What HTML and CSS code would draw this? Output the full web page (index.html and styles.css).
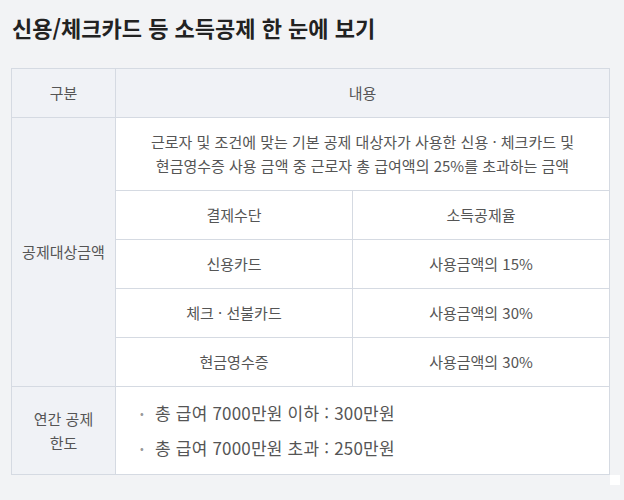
FILE: index.html
```html
<!DOCTYPE html>
<html lang="ko">
<head>
    <meta charset="UTF-8">
    <meta name="viewport" content="width=device-width, initial-scale=1.0">
    <title>신용/체크카드 등 소득공제 한 눈에 보기</title>
    <link rel="stylesheet" href="styles.css">
</head>
<body>
    <div class="page">
        <h1 class="title">신용/체크카드 등 소득공제 한 눈에 보기</h1>
        <div class="table-wrap">
            <table class="deduct-table">
                <colgroup>
                    <col class="col-label">
                    <col class="col-method">
                    <col class="col-rate">
                </colgroup>
                <tr>
                    <th>구분</th>
                    <th colspan="2">내용</th>
                </tr>
                <tr>
                    <th rowspan="5">공제대상금액</th>
                    <td colspan="2" class="desc">근로자 및 조건에 맞는 기본 공제 대상자가 사용한 신용 · 체크카드 및<br>현금영수증 사용 금액 중 근로자 총 급여액의 25%를 초과하는 금액</td>
                </tr>
                <tr>
                    <td>결제수단</td>
                    <td>소득공제율</td>
                </tr>
                <tr>
                    <td>신용카드</td>
                    <td>사용금액의 15%</td>
                </tr>
                <tr>
                    <td>체크 · 선불카드</td>
                    <td>사용금액의 30%</td>
                </tr>
                <tr>
                    <td>현금영수증</td>
                    <td>사용금액의 30%</td>
                </tr>
                <tr>
                    <th>연간 공제 한도</th>
                    <td colspan="2" class="limit">
                        <ul class="limit-list">
                            <li>총 급여 7000만원 이하 : 300만원</li>
                            <li>총 급여 7000만원 초과 : 250만원</li>
                        </ul>
                    </td>
                </tr>
            </table>
            <div class="corner"></div>
        </div>
    </div>
</body>
</html>
```

FILE: styles.css
```css
body {
    margin: 0;
    background-color: #f2f3f5;
    font-family: "Noto Sans CJK KR", "Noto Sans", sans-serif;
    color: #555;
}
.page {
    padding: 12px 0 0 11px;
}
.title {
    margin: 0 0 26px 1px;
    font-size: 22px;
    line-height: 30px;
    font-weight: 700;
    color: #222;
}
.table-wrap {
    display: grid;
    grid-template-columns: 599px 10px;
    grid-template-rows: auto 10px;
}
.corner {
    grid-column: 2;
    grid-row: 2;
    background-color: #fff;
}
.deduct-table {
    width: 599px;
    table-layout: fixed;
    border-collapse: collapse;
    background-color: #fff;
    font-size: 15px;
    line-height: 24px;
}
.col-label {
    width: 104px;
}
.col-method {
    width: 237px;
}
.deduct-table th,
.deduct-table td {
    border: 1px solid #d5dae2;
    padding: 12px 6px;
    text-align: center;
    font-weight: 400;
    color: #555;
}
.deduct-table th {
    background-color: #f0f2f6;
    word-break: keep-all;
}
.deduct-table td.desc {
    padding: 12px 20px;
}
.deduct-table td.limit {
    padding: 14px 20px 14px 24px;
    text-align: left;
}
.limit-list {
    margin: 0;
    padding: 0;
    list-style: none;
    font-size: 17px;
    letter-spacing: 0.2px;
}
.limit-list li {
    height: 24px;
    line-height: 24px;
}
.limit-list li + li {
    margin-top: 11px;
}
.limit-list li::before {
    content: "•";
    display: inline-block;
    width: 15px;
    font-size: 11px;
    line-height: 1;
    vertical-align: 2px;
    color: #999;
}
```
